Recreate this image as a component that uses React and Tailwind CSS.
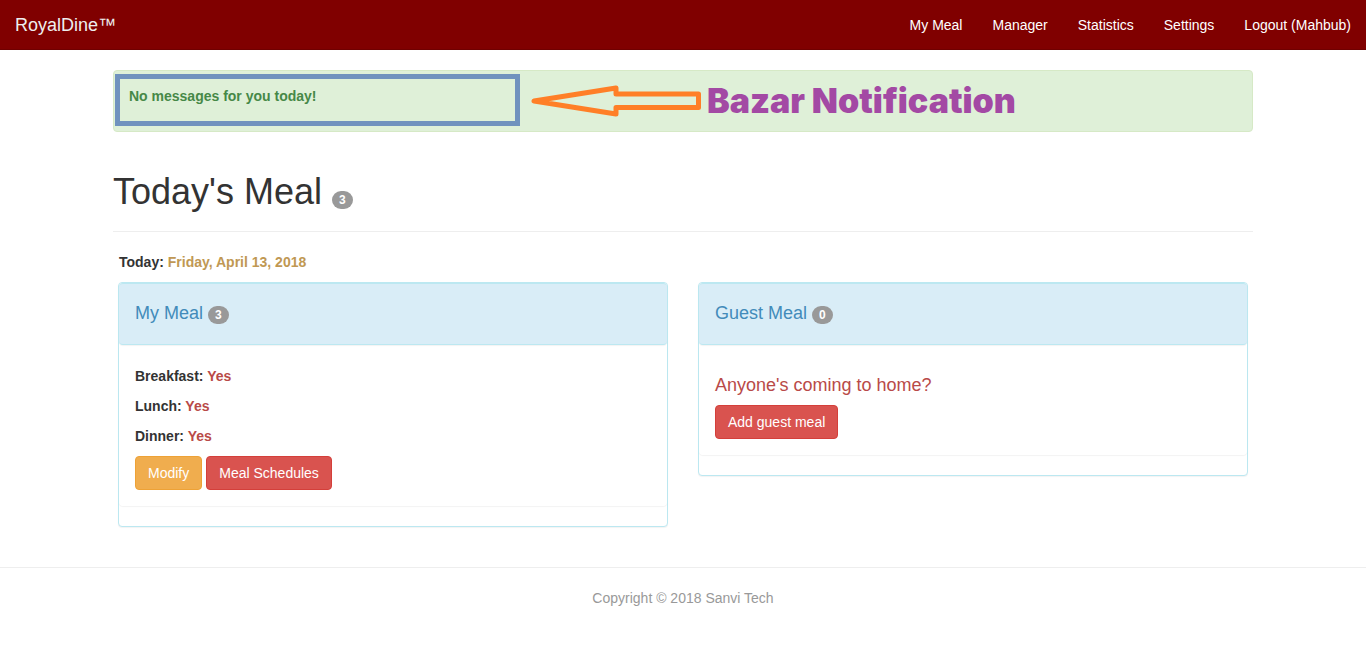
import React from "react";

const links = ["My Meal", "Manager", "Statistics", "Settings", "Logout (Mahbub)"];

function Badge({ children }) {
  return (
    <span className="inline-block min-w-[10px] rounded-[10px] bg-[#999999] px-[7px] py-[3px] text-center align-baseline text-xs leading-3 font-bold text-white">
      {children}
    </span>
  );
}

function Panel({ title, count, children }) {
  return (
    <section className="flex-1 rounded border border-[#bce8f1] bg-white shadow-[0_1px_1px_rgba(0,0,0,0.05)]">
      <div className="h-[62px] rounded border-y border-[#bce8f1] bg-[#d9edf7] px-4 pt-[19px] shadow-[0_1px_1px_rgba(0,0,0,0.05)]">
        <h2 className="text-lg leading-5 text-[#428bba]">
          {title} <Badge>{count}</Badge>
        </h2>
      </div>
      <div className="mb-5 rounded px-4 pt-[21px] pb-4 shadow-[0_1px_1px_rgba(0,0,0,0.05)]">{children}</div>
    </section>
  );
}

function Meal({ name }) {
  return (
    <p className="mb-[10px] leading-5 font-bold">
      {name}: <span className="text-[#b94a48]">Yes</span>
    </p>
  );
}

const button = "h-[34px] cursor-pointer rounded border px-3 text-sm leading-5 text-white";

export default function App() {
  return (
    <div className="bg-white font-['Liberation_Sans',Arial,sans-serif] text-sm leading-5 text-[#333333]">
      <nav className="flex items-center justify-between border-b border-[#700000] bg-[#800000] px-[15px] text-white">
        <a href="#" className="text-lg leading-5 text-[#eeeeee]">RoyalDine™</a>
        <div className="flex gap-[30px]">
          {links.map((label) => (
            <a key={label} href="#" className="pt-[15px] pb-[14px]">{label}</a>
          ))}
        </div>
      </nav>

      <main className="mx-auto mt-5 max-w-[1140px]">
        <div className="flex h-[62px] items-start rounded border border-[#d6e9c6] bg-[#dff0d8] pt-[3px] pl-px">
          <div className="h-[52px] w-[405px] border-[5px] border-[#7092be] px-[9px] pt-[7px] font-bold text-[#468847]">
            No messages for you today!
          </div>
          <svg viewBox="0 0 172 34" className="mt-[10px] ml-[10px] h-[34px] w-[172px]" fill="none" stroke="#ff7f27" strokeWidth="5" strokeLinejoin="round" aria-hidden="true">
            <path d="M4 17 L86 4 V10 H168.500 V23.500 H86 V30 Z" />
          </svg>
          <strong className="mt-[7px] ml-[5px] font-['Inter','Liberation_Sans',sans-serif] text-[34px] leading-10 font-black whitespace-nowrap text-[#a349a4]">
            Bazar Notification
          </strong>
        </div>

        <h1 className="mt-10 border-b border-[#eeeeee] pb-[19px] text-4xl leading-10">
          Today&apos;s Meal <Badge>3</Badge>
        </h1>

        <div className="px-[5px] pt-5">
          <p className="mb-[10px] px-px font-bold">
            Today: <span className="text-[#c09853]">Friday, April 13, 2018</span>
          </p>
          <div className="flex items-start gap-[30px]">
            <Panel title="My Meal" count="3">
              <Meal name="Breakfast" />
              <Meal name="Lunch" />
              <Meal name="Dinner" />
              <div className="flex gap-1">
                <button className={`${button} border-[#eea236] bg-[#f0ad4e]`}>Modify</button>
                <button className={`${button} border-[#d43f3a] bg-[#d9534f]`}>Meal Schedules</button>
              </div>
            </Panel>
            <Panel title="Guest Meal" count="0">
              <h3 className="mt-[9px] mb-[10px] text-lg leading-5 text-[#b94a48]">Anyone&apos;s coming to home?</h3>
              <button className={`${button} border-[#d43f3a] bg-[#d9534f]`}>Add guest meal</button>
            </Panel>
          </div>
        </div>
      </main>

      <footer className="mt-10 border-t border-[#eeeeee] pt-5 pb-5 text-center text-[#999999]">
        Copyright © 2018 Sanvi Tech
      </footer>
    </div>
  );
}
